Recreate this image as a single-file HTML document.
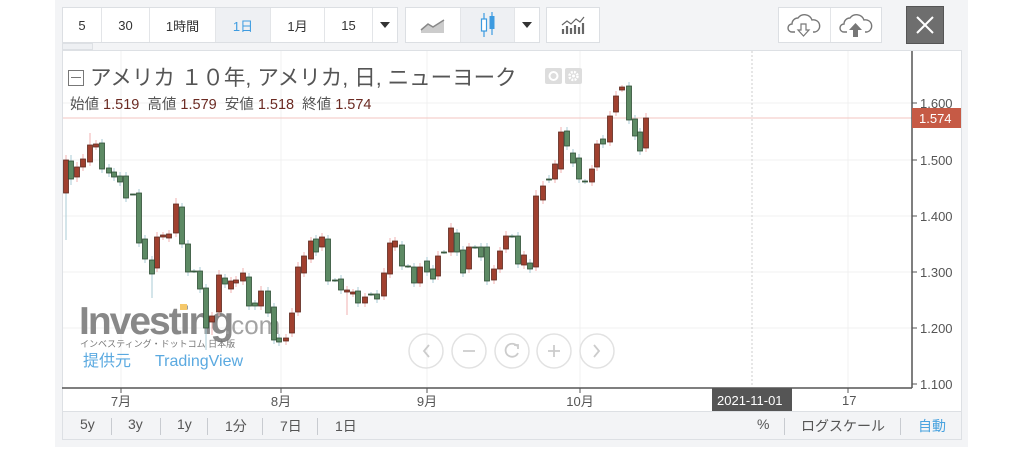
<!DOCTYPE html>
<html><head><meta charset="utf-8"><style>
*{margin:0;padding:0;box-sizing:border-box}
body{width:1024px;height:473px;background:#fff;font-family:"Liberation Sans","Noto Sans CJK JP",sans-serif;position:relative;overflow:hidden}
.panel{position:absolute;left:55px;top:0;width:913px;height:447px;background:#f3f4f6}
.grp{position:absolute;top:7px;height:36px;background:#fff;border:1px solid #dcdfe3;display:flex}
.grp div{height:100%;border-right:1px solid #e3e5e8;display:flex;align-items:center;justify-content:center;font-size:13px;color:#333}
.grp div:last-child{border-right:none}
.act{background:#eef0f3;color:#3d9be0!important}
.chart{position:absolute;left:62px;top:50px;width:900px;height:362px;background:#fff;border:1px solid #dde0e4}
.bb{position:absolute;left:62px;top:412px;width:900px;height:28px;border:1px solid #dde0e4;border-top:none;background:#f3f4f6;font-size:14px;color:#555}
.bb span{position:absolute;top:4px}
.sep{position:absolute;top:6px;width:1px;height:17px;background:#c8cbd0}
.t{position:absolute;white-space:nowrap}
</style></head><body>
<div class="panel"></div>
<div class="grp" style="left:62px;width:336px">
<div style="width:39px">5</div><div style="width:48px">30</div><div style="width:66px">1時間</div><div class="act" style="width:55px">1日</div><div style="width:54px">1月</div><div style="width:48px">15</div><div style="width:24px"><svg width="10" height="6"><path d="M0 0H10L5 6Z" fill="#333"/></svg></div>
</div>
<div class="grp" style="left:405px;width:135px">
<div style="width:55px"><svg width="26" height="16"><path d="M1 13L8 7L13 10L24 3V16H1Z" fill="#ccc"/><path d="M1 13L8 7L13 10L24 3" stroke="#888" stroke-width="1.5" fill="none"/></svg></div>
<div class="act" style="width:54px"><svg width="20" height="28"><path d="M6 2V26M14 1V24" stroke="#3d9be0" stroke-width="1.2"/><rect x="3.5" y="8" width="5" height="12" fill="#fff" stroke="#3d9be0" stroke-width="1.2"/><rect x="11.5" y="5" width="5" height="13" fill="#3d9be0"/></svg></div>
<div style="width:24px"><svg width="10" height="6"><path d="M0 0H10L5 6Z" fill="#333"/></svg></div>
</div>
<div class="grp" style="left:546px;width:54px"><div style="width:52px"><svg width="24" height="18"><path d="M1 9L6 5L10 8L15 3L19 6L23 1" stroke="#666" fill="none" stroke-width="1.2"/><path d="M2 18V13M6 18V10M10 18V12M14 18V9M18 18V11M22 18V7" stroke="#666" stroke-width="2.2"/></svg></div></div>
<div class="grp" style="left:778px;width:104px">
<div style="width:52px"><svg width="34" height="24"><path d="M8 19H5a4 4 0 0 1 0-8 6 6 0 0 1 6-6 8 8 0 0 1 14 2 6 6 0 0 1 3 12h-2" fill="none" stroke="#777" stroke-width="1.4"/><path d="M14 11h5v6h3l-5.5 6-5.5-6h3z" fill="#fff" stroke="#777" stroke-width="1.2"/></svg></div>
<div style="width:51px"><svg width="34" height="24"><path d="M8 19H5a4 4 0 0 1 0-8 6 6 0 0 1 6-6 8 8 0 0 1 14 2 6 6 0 0 1 3 12h-2" fill="none" stroke="#777" stroke-width="1.4"/><path d="M14 24v-7h-4l6.5-7 6.5 7h-4v7z" fill="#777"/></svg></div>
</div>
<div style="position:absolute;left:906px;top:6px;width:38px;height:38px;background:#6e6e6e;border:1px solid #555"><svg width="36" height="36"><path d="M10 10L26 26M26 10L10 26" stroke="#fff" stroke-width="2"/></svg></div>
<div style="position:absolute;left:62px;top:43px;width:31px;height:7px;border:1px solid #dde0e4;background:#eef0f3"></div>

<div class="chart"></div>
<svg style="position:absolute;left:0;top:0" width="1024" height="473">
<g stroke="#f1f1f1" stroke-width="1">
<path d="M63 103H912M63 160H912M63 216H912M63 272H912M63 328H912M121 51V387M281 51V387M427 51V387M580 51V387M848 51V387"/>
</g>
<path d="M752 51V387" stroke="#ccc" stroke-dasharray="2,2"/>
<path d="M63 118H912" stroke="#f3c6c0"/>
<path d="M62 388H912M912 51V388" stroke="#555" stroke-width="1.5"/>
<path d="M121 388v5M281 388v5M427 388v5M580 388v5M848 388v5M912 103h5M912 160h5M912 216h5M912 272h5M912 328h5M912 384h5" stroke="#555"/>
<g fill="#555" font-size="13" font-family="Liberation Sans,sans-serif">
<text x="920" y="108">1.600</text><text x="920" y="165">1.500</text><text x="920" y="221">1.400</text><text x="920" y="277">1.300</text><text x="920" y="333">1.200</text><text x="920" y="389">1.100</text>
<text x="842" y="405">17</text>
</g>
<rect x="912" y="108" width="49" height="20" fill="#c65a45"/>
<text x="919" y="123" fill="#fff" font-size="13" font-family="Liberation Sans,sans-serif">1.574</text>
<rect x="712" y="388" width="80" height="23" fill="#555"/>
<text x="717" y="405" fill="#fff" font-size="13" font-family="Liberation Sans,sans-serif">2021-11-01</text>
<g fill="#555" font-size="13" font-family="Liberation Sans,Noto Sans CJK JP,sans-serif" text-anchor="middle">
<text x="121" y="406">7月</text><text x="281" y="406">8月</text><text x="427" y="406">9月</text><text x="580" y="406">10月</text>
</g>
<text x="79" y="334" font-size="39" font-weight="bold" fill="#7c7c7c" font-family="Liberation Sans,sans-serif" letter-spacing="-2" opacity="0.9">Investing</text>
<text x="224" y="334" font-size="26" fill="#9a9a9a" font-family="Liberation Sans,sans-serif" opacity="0.9">.com</text>
<rect x="180" y="304" width="7" height="6" fill="#f5c86a"/>
<text x="80" y="347" font-size="9" fill="#777" font-family="Liberation Sans,Noto Sans CJK JP,sans-serif">インベスティング・ドットコム 日本版</text>
<text x="83" y="366" font-size="16" fill="#5aa9e0" font-family="Liberation Sans,Noto Sans CJK JP,sans-serif">提供元</text>
<text x="155" y="366" font-size="16" fill="#5aa9e0" font-family="Liberation Sans,sans-serif">TradingView</text>
<g fill="none" stroke="#e2e2e2" stroke-width="1.5">
<circle cx="426" cy="351" r="17"/><circle cx="469" cy="351" r="17"/><circle cx="512" cy="351" r="17"/><circle cx="554" cy="351" r="17"/><circle cx="597" cy="351" r="17"/>
<g stroke="#ccc" stroke-width="1.8"><path d="M429 345l-5 6 5 6M594 345l5 6-5 6M463 351h12M548 351h12M554 345v12"/><path d="M517 346a6.5 6.5 0 1 0 1 7"/><path d="M514 345h4v4"/></g>
</g>
<g stroke-width="1">
<g stroke="#f2b2b2"><path d="M66 155V197M77 162V182M83 154V171M90 133V166M96 140V150M157 232V272M163 232V240M169 230V242M176 198V237M212 312V335M219 270V316M231 277V293M236 276V287M243 268V285M261 286V310M286 334V345M292 308V337M298 262V316M304 252V277M311 237V263M322 233V251M347 286V315M353 289V297M365 293V307M384 268V300M390 238V278M395 237V251M420 263V287M438 251V280M451 223V256M469 243V273M494 265V284M500 247V273M506 231V253M524 251V269M536 190V271M543 181V204M555 160V183M561 127V173M592 165V186M597 140V171M610 111V146M616 91V116M622 85V92M646 113V152"/></g>
<g stroke="#a9cbd6"><path d="M66 193V240M71 155V185M102 139V173M109 164V177M114 168V181M120 172V186M126 172V202M133 194V195M139 189V247M145 235V263M152 256V298M182 203V248M188 240V276M194 269V273M200 267V293M206 284V350M225 274V288M249 273V310M255 300V310M268 287V317M274 303V344M279 334V346M316 235V256M328 235V285M335 278V282M341 275V294M358 287V307M371 292V296M377 290V303M402 241V270M408 264V268M414 263V287M427 257V276M433 265V283M444 250V254M457 229V256M463 246V277M475 245V249M481 243V261M487 243V285M512 234V238M518 232V268M530 259V273M549 175V183M567 127V150M573 149V167M579 154V183M585 179V184M603 135V148M629 82V124M635 115V140M640 128V155"/></g>
</g>
<g fill="#a0402f" stroke="#5e2a20" stroke-width="0.8">
<rect x="63.5" y="160" width="5" height="33"/><rect x="74.5" y="167" width="5" height="10"/><rect x="80.5" y="159" width="5" height="8"/><rect x="87.5" y="145" width="5" height="17"/><rect x="93.5" y="144" width="5" height="3"/>
<rect x="154.5" y="237" width="5" height="31"/><rect x="160.5" y="235" width="5" height="2"/><rect x="166.5" y="234" width="5" height="4"/><rect x="173.5" y="204" width="5" height="29"/>
<rect x="209.5" y="316" width="5" height="6"/><rect x="216.5" y="275" width="5" height="37"/><rect x="228.5" y="281" width="5" height="8"/><rect x="233.5" y="280" width="5" height="3"/><rect x="240.5" y="273" width="5" height="8"/><rect x="258.5" y="291" width="5" height="15"/>
<rect x="283.5" y="338" width="5" height="3"/><rect x="289.5" y="313" width="5" height="20"/><rect x="295.5" y="267" width="5" height="45"/><rect x="301.5" y="256" width="5" height="17"/><rect x="308.5" y="241" width="5" height="18"/><rect x="319.5" y="237" width="5" height="10"/>
<rect x="344.5" y="290" width="5" height="2"/><rect x="350.5" y="292" width="5" height="2"/><rect x="362.5" y="297" width="5" height="6"/><rect x="381.5" y="273" width="5" height="23"/><rect x="387.5" y="243" width="5" height="31"/><rect x="392.5" y="241" width="5" height="6"/>
<rect x="417.5" y="267" width="5" height="16"/><rect x="435.5" y="256" width="5" height="20"/><rect x="448.5" y="228" width="5" height="24"/><rect x="466.5" y="247" width="5" height="22"/><rect x="491.5" y="269" width="5" height="11"/><rect x="497.5" y="251" width="5" height="18"/><rect x="503.5" y="236" width="5" height="13"/><rect x="521.5" y="255" width="5" height="10"/>
<rect x="533.5" y="196" width="5" height="71"/><rect x="540.5" y="186" width="5" height="14"/><rect x="552.5" y="164" width="5" height="15"/><rect x="558.5" y="132" width="5" height="37"/><rect x="589.5" y="169" width="5" height="13"/><rect x="594.5" y="144" width="5" height="23"/><rect x="607.5" y="116" width="5" height="26"/><rect x="613.5" y="96" width="5" height="16"/><rect x="619.5" y="87" width="5" height="3"/><rect x="643.5" y="118" width="5" height="30"/>
</g>
<g fill="#5d8a64" stroke="#2f4f35" stroke-width="0.8">
<rect x="68.5" y="161" width="5" height="18"/><rect x="99.5" y="143" width="5" height="26"/><rect x="106.5" y="168" width="5" height="5"/><rect x="111.5" y="172" width="5" height="5"/><rect x="117.5" y="176" width="5" height="6"/><rect x="123.5" y="176" width="5" height="22"/><rect x="130.5" y="194" width="5" height="1"/>
<rect x="136.5" y="193" width="5" height="50"/><rect x="142.5" y="239" width="5" height="20"/><rect x="149.5" y="260" width="5" height="14"/><rect x="179.5" y="207" width="5" height="37"/><rect x="185.5" y="244" width="5" height="28"/><rect x="191.5" y="271" width="5" height="1"/><rect x="197.5" y="271" width="5" height="18"/><rect x="203.5" y="288" width="5" height="40"/>
<rect x="222.5" y="278" width="5" height="6"/><rect x="246.5" y="277" width="5" height="29"/><rect x="252.5" y="303" width="5" height="3"/><rect x="265.5" y="291" width="5" height="22"/><rect x="271.5" y="307" width="5" height="33"/><rect x="276.5" y="338" width="5" height="4"/>
<rect x="313.5" y="239" width="5" height="13"/><rect x="325.5" y="239" width="5" height="42"/><rect x="332.5" y="280" width="5" height="1"/><rect x="338.5" y="279" width="5" height="11"/><rect x="355.5" y="291" width="5" height="12"/><rect x="368.5" y="294" width="5" height="1"/><rect x="374.5" y="294" width="5" height="5"/>
<rect x="399.5" y="245" width="5" height="21"/><rect x="405.5" y="266" width="5" height="1"/><rect x="411.5" y="267" width="5" height="16"/><rect x="424.5" y="261" width="5" height="11"/><rect x="430.5" y="269" width="5" height="10"/><rect x="441.5" y="252" width="5" height="1"/><rect x="454.5" y="233" width="5" height="19"/><rect x="460.5" y="250" width="5" height="23"/>
<rect x="472.5" y="247" width="5" height="1"/><rect x="478.5" y="247" width="5" height="10"/><rect x="484.5" y="247" width="5" height="34"/><rect x="509.5" y="236" width="5" height="1"/><rect x="515.5" y="236" width="5" height="28"/><rect x="527.5" y="263" width="5" height="6"/>
<rect x="546.5" y="179" width="5" height="1"/><rect x="564.5" y="131" width="5" height="15"/><rect x="570.5" y="153" width="5" height="10"/><rect x="576.5" y="158" width="5" height="21"/><rect x="582.5" y="181" width="5" height="1"/><rect x="600.5" y="139" width="5" height="5"/><rect x="626.5" y="86" width="5" height="34"/><rect x="632.5" y="119" width="5" height="17"/><rect x="637.5" y="132" width="5" height="19"/>
</g>
</svg>
<div class="t" style="left:68px;top:61px;font-size:21.5px;color:#555"><span style="display:inline-block;width:16px;height:16px;border:1.5px solid #777;vertical-align:-1px;position:relative"><span style="position:absolute;left:2px;right:2px;top:6px;border-top:1.5px solid #777"></span></span> アメリカ １０年, アメリカ, 日, ニューヨーク</div>
<div style="position:absolute;left:545px;top:68px;width:17px;height:16px;background:#ddd;border-radius:2px"><svg width="17" height="16"><circle cx="8.5" cy="8" r="4" fill="none" stroke="#fff" stroke-width="2"/></svg></div>
<div style="position:absolute;left:565px;top:68px;width:17px;height:16px;background:#ddd;border-radius:2px"><svg width="17" height="16"><circle cx="8.5" cy="8" r="4" fill="none" stroke="#fff" stroke-width="2.5" stroke-dasharray="2,1.2"/><circle cx="8.5" cy="8" r="1.5" fill="#fff"/></svg></div>
<div class="t" style="left:70px;top:93px;font-size:14.5px;color:#555">始値 <span style="color:#6b2a22">1.519</span>&nbsp; 高値 <span style="color:#6b2a22">1.579</span>&nbsp; 安値 <span style="color:#6b2a22">1.518</span>&nbsp; 終値 <span style="color:#6b2a22">1.574</span></div>
<div class="bb">
<span style="left:17px">5y</span><div class="sep" style="left:48px"></div>
<span style="left:65px">3y</span><div class="sep" style="left:97px"></div>
<span style="left:114px">1y</span><div class="sep" style="left:144px"></div>
<span style="left:162px">1分</span><div class="sep" style="left:199px"></div>
<span style="left:217px">7日</span><div class="sep" style="left:254px"></div>
<span style="left:272px">1日</span>
<span style="left:694px">%</span><div class="sep" style="left:721px"></div>
<span style="left:738px">ログスケール</span><div class="sep" style="left:837px"></div>
<span style="left:855px;color:#4aa3df">自動</span>
</div>
</body></html>
